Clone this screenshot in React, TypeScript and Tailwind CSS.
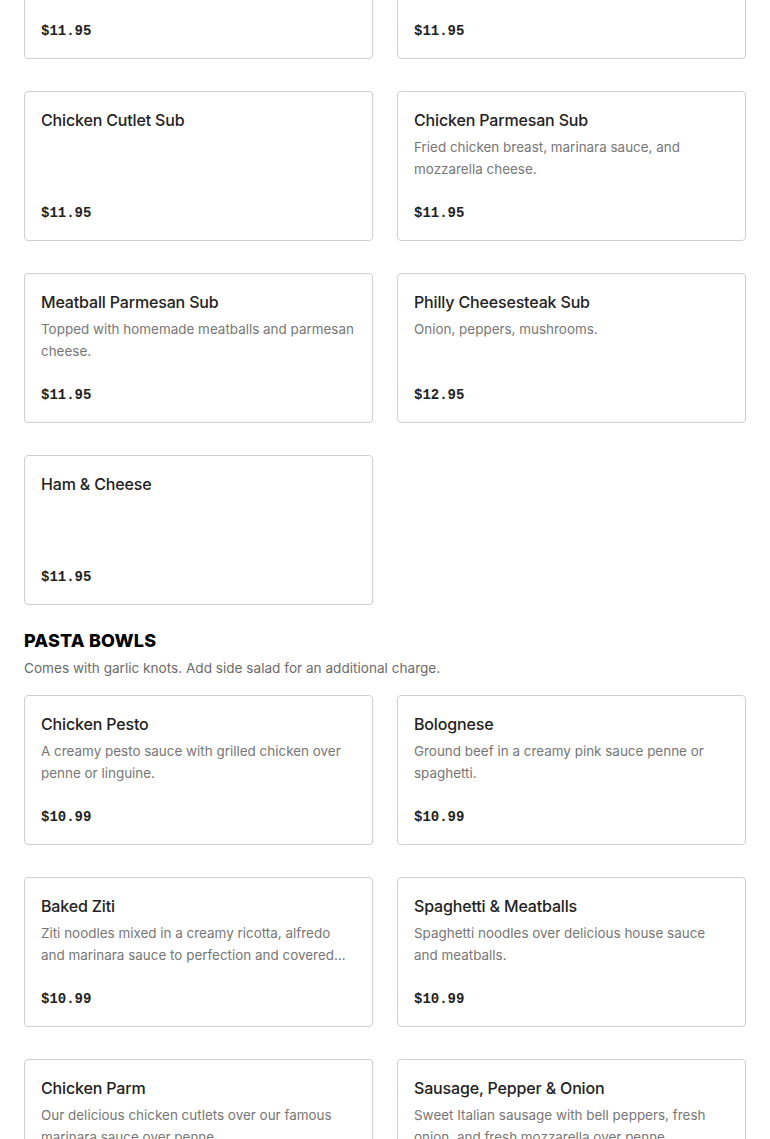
type Item = { name: string; desc?: string; price: string };

const subs: Item[] = [
  { name: 'Italian Sub', desc: 'Ham, salami, capicola and provolone.', price: '$11.95' },
  { name: 'Turkey Sub', desc: 'Turkey, lettuce, tomato and mayo.', price: '$11.95' },
  { name: 'Chicken Cutlet Sub', price: '$11.95' },
  { name: 'Chicken Parmesan Sub', desc: 'Fried chicken breast, marinara sauce, and mozzarella cheese.', price: '$11.95' },
  { name: 'Meatball Parmesan Sub', desc: 'Topped with homemade meatballs and parmesan cheese.', price: '$11.95' },
  { name: 'Philly Cheesesteak Sub', desc: 'Onion, peppers, mushrooms.', price: '$12.95' },
  { name: 'Ham & Cheese', price: '$11.95' },
];

const pasta: Item[] = [
  { name: 'Chicken Pesto', desc: 'A creamy pesto sauce with grilled chicken over penne or linguine.', price: '$10.99' },
  { name: 'Bolognese', desc: 'Ground beef in a creamy pink sauce penne or spaghetti.', price: '$10.99' },
  { name: 'Baked Ziti', desc: 'Ziti noodles mixed in a creamy ricotta, alfredo and marinara sauce to perfection and covered with melted mozzarella cheese.', price: '$10.99' },
  { name: 'Spaghetti & Meatballs', desc: 'Spaghetti noodles over delicious house sauce and meatballs.', price: '$10.99' },
  { name: 'Chicken Parm', desc: 'Our delicious chicken cutlets over our famous marinara sauce over penne.', price: '$10.99' },
  { name: 'Sausage, Pepper & Onion', desc: 'Sweet Italian sausage with bell peppers, fresh onion, and fresh mozzarella over penne.', price: '$10.99' },
];

function Card({ item }: { item: Item }) {
  return (
    <div className="flex h-[150px] flex-col justify-between rounded border border-[#cfcfcf] bg-white p-4">
      <div>
        <h3 className="text-[16px] leading-6 font-medium tracking-[-0.01em] text-[#222]">{item.name}</h3>
        {item.desc && (
          <p className="mt-1 line-clamp-2 text-[13.45px] leading-[22px] text-[#767676]">{item.desc}</p>
        )}
      </div>
      <div className="font-['Liberation_Mono',monospace] text-[14px] leading-[22px] font-bold text-[#222]">
        {item.price}
      </div>
    </div>
  );
}

export default function App() {
  return (
    <div className="min-h-screen overflow-hidden bg-white font-['Inter',sans-serif]">
      <div className="px-6">
        {/* subs (scrolled past the top) */}
        <div className="-mt-[91px] grid grid-cols-2 gap-x-6 gap-y-8">
          {subs.map((it) => (
            <Card key={it.name} item={it} />
          ))}
        </div>

        {/* pasta bowls */}
        <h2 className="mt-6 text-[18px] leading-6 font-extrabold tracking-[0.01em] text-black">PASTA BOWLS</h2>
        <p className="mt-1 text-[13.6px] leading-[22px] text-[#6b6b6b]">
          Comes with garlic knots. Add side salad for an additional charge.
        </p>
        <div className="mt-4 grid grid-cols-2 gap-x-6 gap-y-8 pb-8">
          {pasta.map((it) => (
            <Card key={it.name} item={it} />
          ))}
        </div>
      </div>
    </div>
  );
}
